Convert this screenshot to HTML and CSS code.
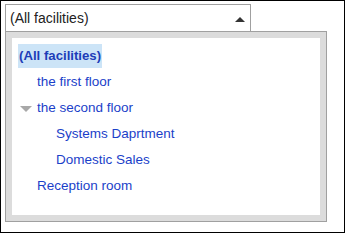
FILE: index.html
```html
<!DOCTYPE html>
<html>
<head>
<meta charset="utf-8">
<link rel="stylesheet" href="styles.css">
</head>
<body>
<div class="frame">
  <div class="select">
    <span class="select-text">(All facilities)</span>
    <svg class="select-arrow" width="10" height="5" viewBox="0 0 10 5"><polygon points="5,0 10,5 0,5" fill="#333"/></svg>
  </div>
  <div class="panel">
    <div class="list">
      <div class="row"><span class="item selected">(All facilities)</span></div>
      <div class="row lvl1"><span class="item">the first floor</span></div>
      <div class="row lvl0 has-toggle">
        <span class="toggle"><svg width="12" height="6" viewBox="0 0 12 6"><polygon points="0,0 12,0 6,6" fill="#a8a8a8"/></svg></span>
        <span class="item">the second floor</span>
      </div>
      <div class="row lvl2"><span class="item">Systems Daprtment</span></div>
      <div class="row lvl2"><span class="item">Domestic Sales</span></div>
      <div class="row lvl1"><span class="item">Reception room</span></div>
    </div>
  </div>
</div>
</body>
</html>
```

FILE: styles.css
```css
html, body {
  margin: 0;
  padding: 0;
  background: #fff;
}
.frame {
  width: 345px;
  height: 233px;
  box-sizing: border-box;
  border: 1px solid #000;
  padding: 3px 0 0 4px;
  font-family: "Liberation Sans", Arial, sans-serif;
}
.select {
  width: 246px;
  height: 27px;
  box-sizing: border-box;
  border: 1px solid #a0a0a0;
  border-bottom: none;
  display: flex;
  align-items: center;
  padding-left: 4px;
  font-size: 14px;
  color: #222;
}
.select-text {
  flex: 1;
}
.select-arrow {
  margin-right: 5px;
  margin-top: 3px;
}
.panel {
  width: 322px;
  height: 191px;
  box-sizing: border-box;
  border: 1px solid #a0a0a0;
  background: #dcdcdc;
  padding: 6px;
}
.list {
  background: #fff;
  height: 100%;
  box-sizing: border-box;
  padding: 6px 6px;
  display: flex;
  flex-direction: column;
  gap: 2px;
}
.row {
  display: flex;
  align-items: center;
  height: 24px;
}
.lvl1 { padding-left: 18px; }
.lvl2 { padding-left: 37px; }
.toggle {
  width: 18px;
  display: flex;
  padding-left: 2px;
  box-sizing: border-box;
  margin-top: 1px;
}
.toggle svg { display: block; }
.item {
  display: inline-block;
  line-height: 24px;
  padding: 0 1px;
  font-size: 13.5px;
  color: #1b3fc9;
  white-space: nowrap;
}
.item.selected {
  background: #cce4f7;
  font-weight: bold;
  font-size: 13.2px;
  color: #1d3db8;
}
```
